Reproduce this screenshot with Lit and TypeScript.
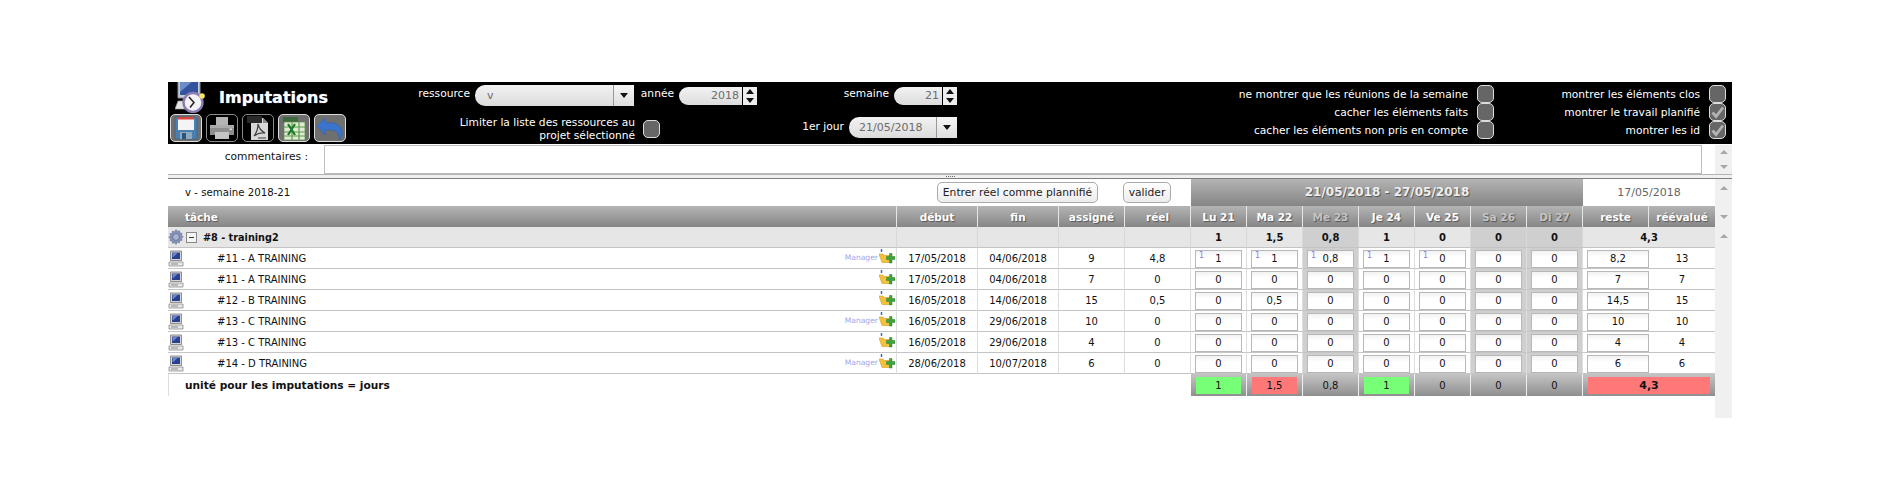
import { LitElement, html, css, svg } from 'lit';
import { customElement } from 'lit/decorators.js';

const DAYS = [
  { label: 'Lu 21' },
  { label: 'Ma 22' },
  { label: 'Me 23', off: true },
  { label: 'Je 24' },
  { label: 'Ve 25' },
  { label: 'Sa 26', off: true },
  { label: 'Di 27', off: true },
];

const ROWS = [
  { name: '#11 - A TRAINING', manager: true, start: '17/05/2018', end: '04/06/2018', assigned: '9', real: '4,8', days: ['1', '1', '0,8', '1', '0', '0', '0'], left: '8,2', revised: '13', planned: 5 },
  { name: '#11 - A TRAINING', manager: false, start: '17/05/2018', end: '04/06/2018', assigned: '7', real: '0', days: ['0', '0', '0', '0', '0', '0', '0'], left: '7', revised: '7', planned: 0 },
  { name: '#12 - B TRAINING', manager: false, start: '16/05/2018', end: '14/06/2018', assigned: '15', real: '0,5', days: ['0', '0,5', '0', '0', '0', '0', '0'], left: '14,5', revised: '15', planned: 0 },
  { name: '#13 - C TRAINING', manager: true, start: '16/05/2018', end: '29/06/2018', assigned: '10', real: '0', days: ['0', '0', '0', '0', '0', '0', '0'], left: '10', revised: '10', planned: 0 },
  { name: '#13 - C TRAINING', manager: false, start: '16/05/2018', end: '29/06/2018', assigned: '4', real: '0', days: ['0', '0', '0', '0', '0', '0', '0'], left: '4', revised: '4', planned: 0 },
  { name: '#14 - D TRAINING', manager: true, start: '28/06/2018', end: '10/07/2018', assigned: '6', real: '0', days: ['0', '0', '0', '0', '0', '0', '0'], left: '6', revised: '6', planned: 0 },
];

const GROUP_TOTALS = ['1', '1,5', '0,8', '1', '0', '0', '0'];
const SUMMARY = [
  { value: '1', state: 'ok' },
  { value: '1,5', state: 'bad' },
  { value: '0,8', state: '' },
  { value: '1', state: 'ok' },
  { value: '0', state: '' },
  { value: '0', state: '' },
  { value: '0', state: '' },
];

const pcSmall = html`<svg width="16" height="17" viewBox="0 0 16 17">
  <path d="M2.500 1h11v9.500h-11z" fill="#d4d4d4" stroke="#777" stroke-width=".8"/>
  <path d="M4 2.500h8v6.500H4z" fill="#27418f"/>
  <path d="M4.500 3h5l-4 4h-1z" fill="#6a86c8"/>
  <path d="M1 12h14v4H1z" fill="#e8e8e8" stroke="#8b8b8b" stroke-width=".8"/>
  <path d="M3 14h7" stroke="#888"/>
</svg>`;

const folderAdd = html`<svg width="16" height="17" viewBox="0 0 16 17">
  <path d="M2.500 0v3" stroke="#3a6bb5" stroke-width="1.500"/>
  <path d="M0 5h4l1 1.500h5l1 7H3z" fill="#f2c23c" stroke="#d99a1c" stroke-width=".6"/>
  <path d="M7.500 7.500h3v-3h2.500v3h3v3h-3v3.500h-2.500v-3.500h-3z" fill="#3fa340" stroke="#2d7f2f" stroke-width=".5"/>
</svg>`;

const gear = html`<svg width="16" height="16" viewBox="0 0 16 16">
  <path d="M8 .5l1.200 2 2.200-.8.400 2.300 2.300.4-.8 2.200 2 1.200-2 1.200.8 2.200-2.300.4-.4 2.300-2.200-.8L8 15.500l-1.200-2-2.200.8-.4-2.300-2.300-.4.8-2.200-2-1.200 2-1.200-.8-2.200 2.300-.4.4-2.300 2.200.8z" fill="#8494b8" stroke="#5f6f96" stroke-width=".6"/>
  <circle cx="8" cy="8" r="3.400" fill="#aab4cc" stroke="#5f6f96" stroke-width=".8"/>
</svg>`;

const pcClock = svg`<svg width="34" height="31" viewBox="0 0 34 31">
  <path d="M3 -1h22v17H3z" fill="#c8ccd6" stroke="#8a8f9c"/>
  <path d="M5 -1h18v14H5z" fill="#33539d"/>
  <path d="M5 -1h13L5 10z" fill="#6e8cca"/>
  <path d="M0 27l3-8h14v8z" fill="#e6e6e6" stroke="#9a9a9a" stroke-width=".7"/>
  <circle cx="18" cy="20.500" r="9.500" fill="#f4f2f8" stroke="#8b7bb0" stroke-width="2.400"/>
  <path d="M14 15l5 5.500-4 5" stroke="#222" stroke-width="1.500" fill="none"/>
  <circle cx="27" cy="14" r="2.800" fill="#f6e765"/>
</svg>`;

const saveIcon = svg`<svg width="24" height="24" viewBox="0 0 24 24">
  <path d="M1 1h20l2 2v20H1z" fill="#4a7fb2" stroke="#2f5a85" stroke-width=".6"/>
  <path d="M4 1h16v13H4z" fill="#f4f4f4"/>
  <path d="M4 1h16v2.500H4z" fill="#d9453c"/>
  <path d="M6 16h12v7H6z" fill="#8ea8c0"/>
  <path d="M8 17h4v6H8z" fill="#2e5478"/>
</svg>`;

const printIcon = svg`<svg width="26" height="24" viewBox="0 0 26 24">
  <path d="M7 1h12v8H7z" fill="#b4b4b4"/>
  <path d="M1 9h24v10H1z" fill="#8e8e8e"/>
  <path d="M1 9h24v3H1z" fill="#ababab"/>
  <path d="M6 16h14v7H6z" fill="#c4c4c4"/>
  <path d="M20.500 12.500h2.500v1.500h-2.500z" fill="#ddd"/>
</svg>`;

const pdfIcon = svg`<svg width="24" height="26" viewBox="0 0 24 26">
  <path d="M5 3h12l5 5v17H5z" fill="#d6d6d6"/>
  <path d="M17 3v5h5z" fill="#8a8a8a"/>
  <path d="M1 1h15v7H1z" fill="#2a2a2a"/>
  <path d="M8 21c3-4 4-9 4-12 1 4 3 7 7 9-4-.5-8 .5-11 3z" fill="none" stroke="#444" stroke-width="1.300"/>
  <path d="M12 22h8v2h-8z" fill="#8a8a8a"/>
</svg>`;

const csvIcon = svg`<svg width="26" height="25" viewBox="0 0 26 25">
  <path d="M2 1h15v6H2z" fill="#3c6a3c"/>
  <path d="M3 6h21v18H3z" fill="#dfe9d4" stroke="#5e8d4e" stroke-width=".7"/>
  <path d="M3 11h21M3 16h21M3 20h21M11 6v18M18 6v18" stroke="#5e9c49" stroke-width="1.200" fill="none"/>
  <path d="M7 8l7 11M14 8l-7 11" stroke="#1f7a2c" stroke-width="2.200"/>
</svg>`;

const undoIcon = svg`<svg width="28" height="25" viewBox="0 0 28 25">
  <path d="M1 10L9 2v5c9-1.500 17 2 17 10 0 3-1 5-3 7 1-8-4-11-14-10v5z" fill="#3a74cc" stroke="#2c62b4" stroke-width=".6"/>
</svg>`;

@customElement('time-check')
export class TimeCheck extends LitElement {
  static properties = { checked: { type: Boolean } };
  declare checked: boolean;

  static styles = css`
    :host {
      display: block;
      width: 17px;
      height: 18px;
      box-sizing: border-box;
      background: #666;
      border: 1px solid #dcdcdc;
      border-radius: 5px;
    }
    svg {
      display: block;
    }
  `;

  render() {
    return this.checked
      ? html`<svg width="15" height="16" viewBox="0 0 15 16"><path d="M2.500 8.500l3.500 4 7-9" fill="none" stroke="#b4b4b4" stroke-width="2.800"/></svg>`
      : html``;
  }
}

@customElement('app-root')
export class AppRoot extends LitElement {
  static styles = css`
    :host {
      display: block;
      box-sizing: border-box;
      width: 1900px;
      padding: 82px 0 0 168px;
      font-family: 'DejaVu Sans', Verdana, sans-serif;
      font-size: 10px;
      color: #111;
    }

    /* top black bar */
    .head {
      width: 1564px;
      height: 62px;
      background: #000;
      color: #fff;
      font-size: 10.670px;
      display: grid;
      grid-template-columns: 245px 225px 119px 200px 537px 232px 6px;
      grid-template-rows: 32px 30px;
    }
    .brand {
      grid-column: 1;
      grid-row: 1 / 3;
      display: flex;
      flex-direction: column;
    }
    .title-line {
      height: 32px;
      display: flex;
      align-items: flex-start;
      padding-left: 7px;
      gap: 10px;
      overflow: hidden;
    }
    .title {
      font-size: 16px;
      font-weight: bold;
      line-height: 31px;
      text-shadow: 0 0 1px #9fb8e8;
    }
    .tools {
      display: flex;
      gap: 4px;
      padding-left: 2px;
    }
    .tool {
      width: 32px;
      height: 28px;
      box-sizing: border-box;
      border-radius: 5px;
      border: 1px solid #dcdcdc;
      background: #6f6f6f;
      display: flex;
      align-items: center;
      justify-content: center;
      overflow: hidden;
    }
    .tool.dark {
      background: #000;
      border-color: #8a8a8a;
    }
    .field {
      grid-row: 1;
      display: flex;
      justify-content: flex-end;
      align-items: flex-start;
      gap: 5px;
      white-space: nowrap;
    }
    .field .lbl {
      line-height: 18px;
      padding-top: 3px;
    }
    .res-field {
      grid-column: 2;
      padding-right: 4px;
    }
    .year-field {
      grid-column: 3;
    }
    .week-field {
      grid-column: 4;
    }
    .select,
    .spin-input,
    .date {
      background: linear-gradient(#f2f2f2, #dcdcdc);
      color: #6c6c6c;
      font-size: 11px;
      border-radius: 10px 0 0 10px;
      box-sizing: border-box;
    }
    .select {
      width: 159px;
      height: 21px;
      margin-top: 3px;
      display: flex;
      line-height: 21px;
    }
    .select .val {
      flex: 1;
      padding-left: 12px;
    }
    .arrow {
      width: 20px;
      background: linear-gradient(#f6f6f6, #dedede);
      border-left: 1px solid #999;
      display: flex;
      align-items: center;
      justify-content: center;
    }
    .arrow::before {
      content: '';
      border: 4px solid transparent;
      border-top: 5px solid #111;
      border-bottom: 0;
    }
    .spin {
      display: flex;
      margin-top: 5px;
      height: 18px;
    }
    .spin-input {
      line-height: 18px;
      text-align: right;
      padding-right: 3px;
    }
    .year {
      width: 63px;
    }
    .week {
      width: 48px;
    }
    .spin-btn {
      width: 14px;
      margin-left: 1px;
      background: #eee;
      display: flex;
      flex-direction: column;
      align-items: center;
      justify-content: space-around;
    }
    .up {
      border: 4px solid transparent;
      border-bottom: 5px solid #111;
      border-top: 0;
    }
    .down {
      border: 4px solid transparent;
      border-top: 5px solid #111;
      border-bottom: 0;
    }
    .limit {
      grid-column: 2 / 4;
      grid-row: 2;
      display: flex;
      justify-content: flex-end;
      align-items: center;
      gap: 8px;
      text-align: right;
      line-height: 13px;
      padding: 0 97px 0 0;
    }
    .limit span {
      width: 200px;
    }
    .date-field {
      grid-column: 4;
      grid-row: 2;
    }
    .date-field .lbl {
      padding-top: 4px;
    }
    .date {
      display: flex;
      width: 108px;
      height: 21px;
      line-height: 21px;
      margin-top: 3px;
    }
    .date .val {
      flex: 1;
      padding-left: 10px;
    }
    .checks {
      grid-row: 1 / 3;
      padding-top: 3px;
      display: grid;
      grid-auto-rows: 18px;
      justify-content: end;
    }
    .checks-a {
      grid-column: 5;
    }
    .checks-b {
      grid-column: 6;
    }
    .check {
      display: flex;
      justify-content: flex-end;
      align-items: center;
      gap: 9px;
      white-space: nowrap;
    }

    /* comment line */
    .comment {
      width: 1564px;
      height: 30px;
      display: flex;
      align-items: stretch;
      box-sizing: border-box;
      padding-top: 1px;
    }
    .comment label {
      width: 140px;
      font-size: 10.670px;
      text-align: right;
      line-height: 24px;
    }
    .comment .area {
      width: 1378px;
      height: 29px;
      margin-left: 16px;
      box-sizing: border-box;
      border: 1px solid #bdbdbd;
      resize: none;
      outline: none;
      overflow: hidden;
      padding: 0;
    }
    .comment .bar {
      margin-left: auto;
      width: 17px;
      height: 29px;
      background: #f0f0f0;
      display: flex;
      flex-direction: column;
      align-items: center;
      justify-content: space-around;
    }
    .tri-up {
      border: 4px solid transparent;
      border-bottom: 4px solid #a8a8a8;
      border-top: 0;
    }
    .tri-down {
      border: 4px solid transparent;
      border-top: 4px solid #a8a8a8;
      border-bottom: 0;
    }
    .split {
      width: 1564px;
      height: 5px;
      box-sizing: border-box;
      background: #f0f0f0;
      border-top: 1px solid #b4b4b4;
      border-bottom: 1px solid #7d7d7d;
      display: flex;
      justify-content: center;
      align-items: center;
      gap: 1px;
    }
    .split i {
      width: 1px;
      height: 1px;
      background: #666;
    }

    /* table */
    .grid-wrap {
      display: flex;
      width: 1564px;
    }
    .table {
      width: 1547px;
    }
    .side {
      width: 17px;
      height: 239px;
      background: #f0f0f0;
      display: flex;
      flex-direction: column;
      align-items: center;
    }
    .side .tri-up {
      margin-top: 7px;
    }
    .side .tri-down {
      margin-top: 25px;
    }
    .side .tri-up.second {
      margin-top: 15px;
    }
    .row {
      display: grid;
      grid-template-columns: 729px 81px 81px 66px 66px repeat(7, 56px) 66px 66px;
    }
    .sub {
      height: 27px;
      display: grid;
      grid-template-columns: 1023px 392px 132px;
    }
    .sub-left {
      display: flex;
      align-items: center;
      padding-left: 17px;
      font-size: 10.200px;
    }
    .btn {
      box-sizing: border-box;
      height: 21px;
      line-height: 19px;
      border: 1px solid #aaa;
      border-radius: 5px;
      background: linear-gradient(#fff, #ececec);
      text-align: center;
      font-size: 10.700px;
      color: #222;
    }
    .b1 {
      width: 161px;
      margin-left: auto;
    }
    .b2 {
      width: 48px;
      margin: 0 20px 0 25px;
    }
    .range {
      background: linear-gradient(#b4b4b4, #858585);
      color: #eee;
      font-size: 12px;
      font-weight: bold;
      text-align: center;
      line-height: 27px;
      text-shadow: 1px 1px 1px #555;
    }
    .asof {
      text-align: center;
      line-height: 27px;
      color: #666;
      font-size: 11px;
    }
    .th {
      height: 21px;
      box-sizing: border-box;
      background: linear-gradient(#b4b4b4, #868686);
      color: #fff;
      font-size: 10.500px;
      font-weight: bold;
      text-align: center;
      line-height: 22px;
      border-right: 1px solid #e6e6e6;
      text-shadow: 1px 1px 1px #555;
      white-space: nowrap;
      overflow: hidden;
    }
    .th.first {
      text-align: left;
      padding-left: 17px;
    }
    .th.off {
      color: #c4c4c4;
    }
    .th:last-child {
      border-right: 0;
    }
    .td {
      height: 21px;
      box-sizing: border-box;
      border-bottom: 1px solid #c4c4c4;
      border-right: 1px solid #dedede;
      text-align: center;
      line-height: 21px;
      white-space: nowrap;
    }
    .td:last-child {
      border-right: 0;
    }
    .group .td {
      background: #e6e6e6;
      font-weight: bold;
      border-right-color: #d8d8d8;
    }
    .group .td.off,
    .td.off {
      background: #cfcfcf;
    }
    .group .name {
      display: flex;
      align-items: center;
      text-align: left;
      gap: 2px;
      font-size: 9.700px;
    }
    .minus {
      width: 11px;
      height: 11px;
      box-sizing: border-box;
      border: 1px solid #8a8a8a;
      background: #f4f4f4;
      display: flex;
      align-items: center;
      justify-content: center;
      margin-right: 4px;
    }
    .minus::before {
      content: '';
      width: 5px;
      height: 1px;
      background: #333;
    }
    .span2 {
      grid-column: span 2;
    }
    .name {
      display: flex;
      align-items: center;
      text-align: left;
    }
    .task {
      margin-left: 33px;
      flex: 1;
    }
    .mgr {
      color: #a3a3ea;
      font-size: 7.600px;
      line-height: 14px;
    }
    .folder {
      display: block;
      width: 16px;
      height: 17px;
      margin: 0 1px 1px 1px;
    }
    .cell-in {
      padding: 2px 4px 0;
    }
    .cell-in.rest {
      padding-right: 0;
      border-right: 0;
    }
    .input {
      position: relative;
      height: 18px;
      box-sizing: border-box;
      line-height: 16px;
      border: 1px solid #b8b8b8;
      background: linear-gradient(#f2f2f2, #fff 6px);
    }
    .input sup {
      position: absolute;
      left: 3px;
      top: 0;
      font-size: 8px;
      line-height: 10px;
      color: #8d7fe6;
    }
    .foot {
      height: 22px;
    }
    .foot-label {
      grid-column: span 5;
      font-size: 10.600px;
      font-weight: bold;
      text-align: left;
      padding-left: 16px;
      line-height: 22px;
      border-left: 1px solid #dedede;
    }
    .foot-cell {
      background: linear-gradient(#c4c4c4, #8f8f8f);
      border-right: 1px solid #f0f0f0;
      padding: 3px 5px 2px 5px;
    }
    .foot-cell:last-child {
      border-right: 0;
    }
    .foot-val {
      height: 17px;
      line-height: 17px;
      text-align: center;
    }
    .foot-val.ok {
      background: #78ff78;
    }
    .foot-val.bad {
      background: #ff7878;
    }
    .foot-val.total {
      font-weight: bold;
      font-size: 11px;
      background: #ff7878;
    }
  `;

  renderCheck(label: string, checked = false) {
    return html`<div class="check"><span>${label}</span><time-check ?checked=${checked}></time-check></div>`;
  }

  renderRow(r: (typeof ROWS)[number]) {
    return html`<div class="row">
      <div class="td name">
        ${pcSmall}
        <span class="task">${r.name}</span>
        ${r.manager ? html`<span class="mgr">Manager</span>` : ''}
        <span class="folder">${folderAdd}</span>
      </div>
      <div class="td">${r.start}</div>
      <div class="td">${r.end}</div>
      <div class="td">${r.assigned}</div>
      <div class="td">${r.real}</div>
      ${r.days.map(
        (v, i) => html`<div class="td cell-in ${DAYS[i].off ? 'off' : ''}">
          <div class="input">${i < r.planned ? html`<sup>1</sup>` : ''}${v}</div>
        </div>`,
      )}
      <div class="td cell-in rest"><div class="input">${r.left}</div></div>
      <div class="td">${r.revised}</div>
    </div>`;
  }

  render() {
    return html`
      <div class="head">
        <div class="brand">
          <div class="title-line">${pcClock}<span class="title">Imputations</span></div>
          <div class="tools">
            <div class="tool">${saveIcon}</div>
            <div class="tool dark">${printIcon}</div>
            <div class="tool dark">${pdfIcon}</div>
            <div class="tool">${csvIcon}</div>
            <div class="tool">${undoIcon}</div>
          </div>
        </div>
        <div class="field res-field">
          <span class="lbl">ressource</span>
          <div class="select"><span class="val">v</span><span class="arrow"></span></div>
        </div>
        <div class="field year-field">
          <span class="lbl">année</span>
          <div class="spin">
            <div class="spin-input year">2018</div>
            <div class="spin-btn"><i class="up"></i><i class="down"></i></div>
          </div>
        </div>
        <div class="field week-field">
          <span class="lbl">semaine</span>
          <div class="spin">
            <div class="spin-input week">21</div>
            <div class="spin-btn"><i class="up"></i><i class="down"></i></div>
          </div>
        </div>
        <div class="checks checks-a">
          ${this.renderCheck('ne montrer que les réunions de la semaine')}
          ${this.renderCheck('cacher les éléments faits')}
          ${this.renderCheck('cacher les éléments non pris en compte')}
        </div>
        <div class="checks checks-b">
          ${this.renderCheck('montrer les éléments clos')}
          ${this.renderCheck('montrer le travail planifié', true)}
          ${this.renderCheck('montrer les id', true)}
        </div>
        <div class="limit">
          <span>Limiter la liste des ressources au projet sélectionné</span>
          <time-check></time-check>
        </div>
        <div class="field date-field">
          <span class="lbl">1er jour</span>
          <div class="date"><span class="val">21/05/2018</span><span class="arrow"></span></div>
        </div>
      </div>

      <div class="comment">
        <label>commentaires :</label>
        <textarea class="area"></textarea>
        <div class="bar"><i class="tri-up"></i><i class="tri-down"></i></div>
      </div>
      <div class="split"><i></i><i></i><i></i><i></i><i></i></div>

      <div class="grid-wrap">
        <div class="table">
          <div class="sub">
            <div class="sub-left">
              <span>v - semaine 2018-21</span>
              <div class="btn b1">Entrer réel comme plannifié</div>
              <div class="btn b2">valider</div>
            </div>
            <div class="range">21/05/2018 - 27/05/2018</div>
            <div class="asof">17/05/2018</div>
          </div>
          <div class="row">
            <div class="th first">tâche</div>
            <div class="th">début</div>
            <div class="th">fin</div>
            <div class="th">assigné</div>
            <div class="th">réel</div>
            ${DAYS.map((d) => html`<div class="th ${d.off ? 'off' : ''}">${d.label}</div>`)}
            <div class="th">reste</div>
            <div class="th">réévalué</div>
          </div>
          <div class="row group">
            <div class="td name">${gear}<span class="minus"></span><span>#8 - training2</span></div>
            <div class="td"></div>
            <div class="td"></div>
            <div class="td"></div>
            <div class="td"></div>
            ${GROUP_TOTALS.map((v, i) => html`<div class="td ${DAYS[i].off ? 'off' : ''}">${v}</div>`)}
            <div class="td span2">4,3</div>
          </div>
          ${ROWS.map((r) => this.renderRow(r))}
          <div class="row foot">
            <div class="foot-label">unité pour les imputations = jours</div>
            ${SUMMARY.map(
              (s) => html`<div class="foot-cell"><div class="foot-val ${s.state}">${s.value}</div></div>`,
            )}
            <div class="foot-cell span2"><div class="foot-val total">4,3</div></div>
          </div>
        </div>
        <div class="side">
          <i class="tri-up"></i>
          <i class="tri-down"></i>
          <i class="tri-up second"></i>
        </div>
      </div>
    `;
  }
}
